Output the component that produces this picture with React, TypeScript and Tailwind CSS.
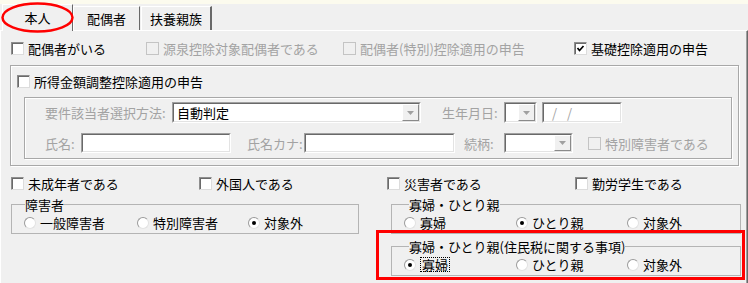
import { FC, ReactNode } from "react";

const Check: FC<{ checked?: boolean; disabled?: boolean }> = ({ checked, disabled }) => (
	<span
		className={
			disabled
				? "flex h-[13px] w-[13px] shrink-0 items-center justify-center border border-[#c4c4c4] bg-[#f0f0f0]"
				: "flex h-[13px] w-[13px] shrink-0 items-center justify-center border border-t-[#8e8e8e] border-l-[#8e8e8e] border-r-[#dcdcdc] border-b-[#dcdcdc] bg-white shadow-[inset_1px_1px_0_#6a6a6a]"
		}>
		{checked && (
			<svg width="9" height="9" viewBox="0 0 9 9">
				<polyline points="1.5,4 3.5,6.5 7.5,2" fill="none" stroke="#000" strokeWidth="1.7" />
			</svg>
		)}
	</span>
);

const CheckItem: FC<{ label: string; checked?: boolean; disabled?: boolean }> = ({ label, checked, disabled }) => (
	<div className="flex h-[16px] items-center gap-[4px] whitespace-nowrap">
		<Check checked={checked} disabled={disabled} />
		<span className={disabled ? "text-[#a3a3a3]" : "text-black"}>{label}</span>
	</div>
);

const Radio: FC<{ label: string; selected?: boolean; focused?: boolean }> = ({ label, selected, focused }) => (
	<div className="flex h-[15px] items-center gap-[4px] whitespace-nowrap">
		<span className="flex h-[12px] w-[12px] shrink-0 items-center justify-center rounded-full border border-t-[#9a9a9a] border-l-[#9a9a9a] border-r-[#e2e2e2] border-b-[#e2e2e2] bg-white">
			{selected && <span className="h-[4px] w-[4px] rounded-full bg-black" />}
		</span>
		<span className={focused ? "border border-dotted border-black px-px leading-[13px]" : ""}>{label}</span>
	</div>
);

const Sunken: FC<{ className: string; children?: ReactNode }> = ({ className, children }) => (
	<div className={`border border-t-[#a0a0a0] border-l-[#a0a0a0] border-r-white border-b-white ${className}`}>
		<div className="flex h-full items-center border border-t-[#696969] border-l-[#696969] border-r-[#e3e3e3] border-b-[#e3e3e3] bg-white">
			{children}
		</div>
	</div>
);

const DropBtn = () => (
	<div className="ml-auto flex h-full w-[17px] items-center justify-center border border-t-white border-l-white border-r-[#8a8a8a] border-b-[#8a8a8a] bg-[#f0f0f0]">
		<svg width="7" height="4" viewBox="0 0 7 4">
			<polygon points="0,0 7,0 3.5,4" fill="#a0a0a0" />
		</svg>
	</div>
);

const Label: FC<{ text: string; className: string }> = ({ text, className }) => (
	<span className={`whitespace-nowrap text-[#a3a3a3] ${className}`}>{text}</span>
);

const Group: FC<{ title: string; legendClass: string; className: string; children: ReactNode }> = ({
	title,
	legendClass,
	className,
	children,
}) => (
	<fieldset className={`border border-[#b4b4b4] ${className}`}>
		<legend className={`leading-[15px] ${legendClass}`}>{title}</legend>
		{children}
	</fieldset>
);

export default function App() {
	return (
		<div className="relative h-[283px] w-[748px] overflow-hidden bg-[#f0f0f0] font-['Noto_Sans_CJK_JP',sans-serif] text-[13px] leading-[15px] text-black">
			<div className="h-[4px] bg-[#fcfbee]" />

			{/* tabs */}
			<div className="flex h-[26px] items-end pl-[2px]">
				<div className="relative z-10 -mb-px flex h-[27px] w-[71px] items-center justify-center border-l border-t border-r border-l-white border-t-white border-r-[#696969] bg-[#f0f0f0] pb-[2px]">
					本人
				</div>
				<div className="flex h-[24px] w-[67px] items-center justify-center border-l border-t border-r border-l-white border-t-white border-r-[#696969] pb-[1px]">
					配偶者
				</div>
				<div className="ml-px flex h-[24px] w-[71px] items-center justify-center border-l border-t border-r-2 border-l-white border-t-white border-r-[#696969] pb-[1px]">
					扶養親族
				</div>
			</div>

			{/* panel */}
			<div className="h-[253px] border-l border-t border-r border-l-white border-t-white border-r-[#696969] pl-[9px] shadow-[inset_-1px_0_0_#a0a0a0]">
				<div className="mt-[9px] flex">
					<div className="ml-px w-[135px]">
						<CheckItem label="配偶者がいる" />
					</div>
					<div className="w-[197px]">
						<CheckItem label="源泉控除対象配偶者である" disabled />
					</div>
					<div className="w-[231px]">
						<CheckItem label="配偶者(特別)控除適用の申告" disabled />
					</div>
					<CheckItem label="基礎控除適用の申告" checked />
				</div>

				<div className="mt-[9px] w-[729px] border border-[#a8a8a8] pt-[7px] pr-[6px] pb-[6px] pl-[13px] shadow-[inset_1px_1px_0_#fff,1px_1px_0_#fff]">
					<div className="-ml-[7px]">
						<CheckItem label="所得金額調整控除適用の申告" />
					</div>
					<div className="mt-[8px] w-[708px] border border-[#a8a8a8] pt-[4px] pb-[5px] pl-[20px] shadow-[inset_1px_1px_0_#fff,1px_1px_0_#fff]">
						<div className="flex h-[21px] items-center">
							<Label text="要件該当者選択方法:" className="w-[127px]" />
							<Sunken className="h-[21px] w-[249px]">
								<span className="pl-[3px]">自動判定</span>
								<DropBtn />
							</Sunken>
							<Label text="生年月日:" className="ml-[21px] w-[62px]" />
							<Sunken className="h-[21px] w-[33px]">
								<DropBtn />
							</Sunken>
							<Sunken className="ml-[5px] h-[21px] w-[80px]">
								<span className="pl-[8px] text-[#a3a3a3]">/</span>
								<span className="pl-[10px] text-[#a3a3a3]">/</span>
							</Sunken>
						</div>
						<div className="mt-[10px] flex h-[20px] items-center">
							<Label text="氏名:" className="w-[36px]" />
							<Sunken className="h-[20px] w-[150px]" />
							<Label text="氏名カナ:" className="ml-[16px] w-[57px]" />
							<Sunken className="h-[20px] w-[151px]" />
							<Label text="続柄:" className="ml-[9px] w-[40px]" />
							<Sunken className="h-[20px] w-[69px]">
								<DropBtn />
							</Sunken>
							<div className="ml-[15px]">
								<CheckItem label="特別障害者である" disabled />
							</div>
						</div>
					</div>
				</div>

				<div className="mt-[9px] ml-px grid grid-cols-[188px_188px_188px_1fr]">
					<CheckItem label="未成年者である" />
					<CheckItem label="外国人である" />
					<CheckItem label="災害者である" />
					<CheckItem label="勤労学生である" />
				</div>

				<div className="mt-[6px] flex items-start">
					<Group title="障害者" legendClass="ml-px" className="ml-px w-[348px] pt-[3px] pb-[3px] pl-[12px]">
						<div className="grid grid-cols-[113px_111px_1fr]">
							<Radio label="一般障害者" />
							<Radio label="特別障害者" />
							<Radio label="対象外" selected />
						</div>
					</Group>

					<div className="ml-[32px] flex w-[350px] flex-col">
						<Group title="寡婦・ひとり親" legendClass="ml-[5px]" className="pt-[3px] pb-[3px] pl-[12px]">
							<div className="grid grid-cols-[112px_111px_1fr]">
								<Radio label="寡婦" />
								<Radio label="ひとり親" selected />
								<Radio label="対象外" />
							</div>
						</Group>
						<Group title="寡婦・ひとり親(住民税に関する事項)" legendClass="ml-[5px]" className="mt-[5px] pt-[3px] pb-[3px] pl-[12px]">
							<div className="grid grid-cols-[112px_111px_1fr]">
								<Radio label="寡婦" selected focused />
								<Radio label="ひとり親" />
								<Radio label="対象外" />
							</div>
						</Group>
					</div>
				</div>
			</div>

			{/* annotations */}
			<svg className="absolute top-0 left-0 z-20" width="80" height="36" viewBox="0 0 80 36">
				<ellipse cx="37.5" cy="17.5" rx="35" ry="14" fill="none" stroke="#ff0000" strokeWidth="2.5" />
			</svg>
			<div className="absolute top-[230px] left-[376px] z-20 h-[50px] w-[369px] border-[3px] border-[#ff0000]" />
		</div>
	);
}
